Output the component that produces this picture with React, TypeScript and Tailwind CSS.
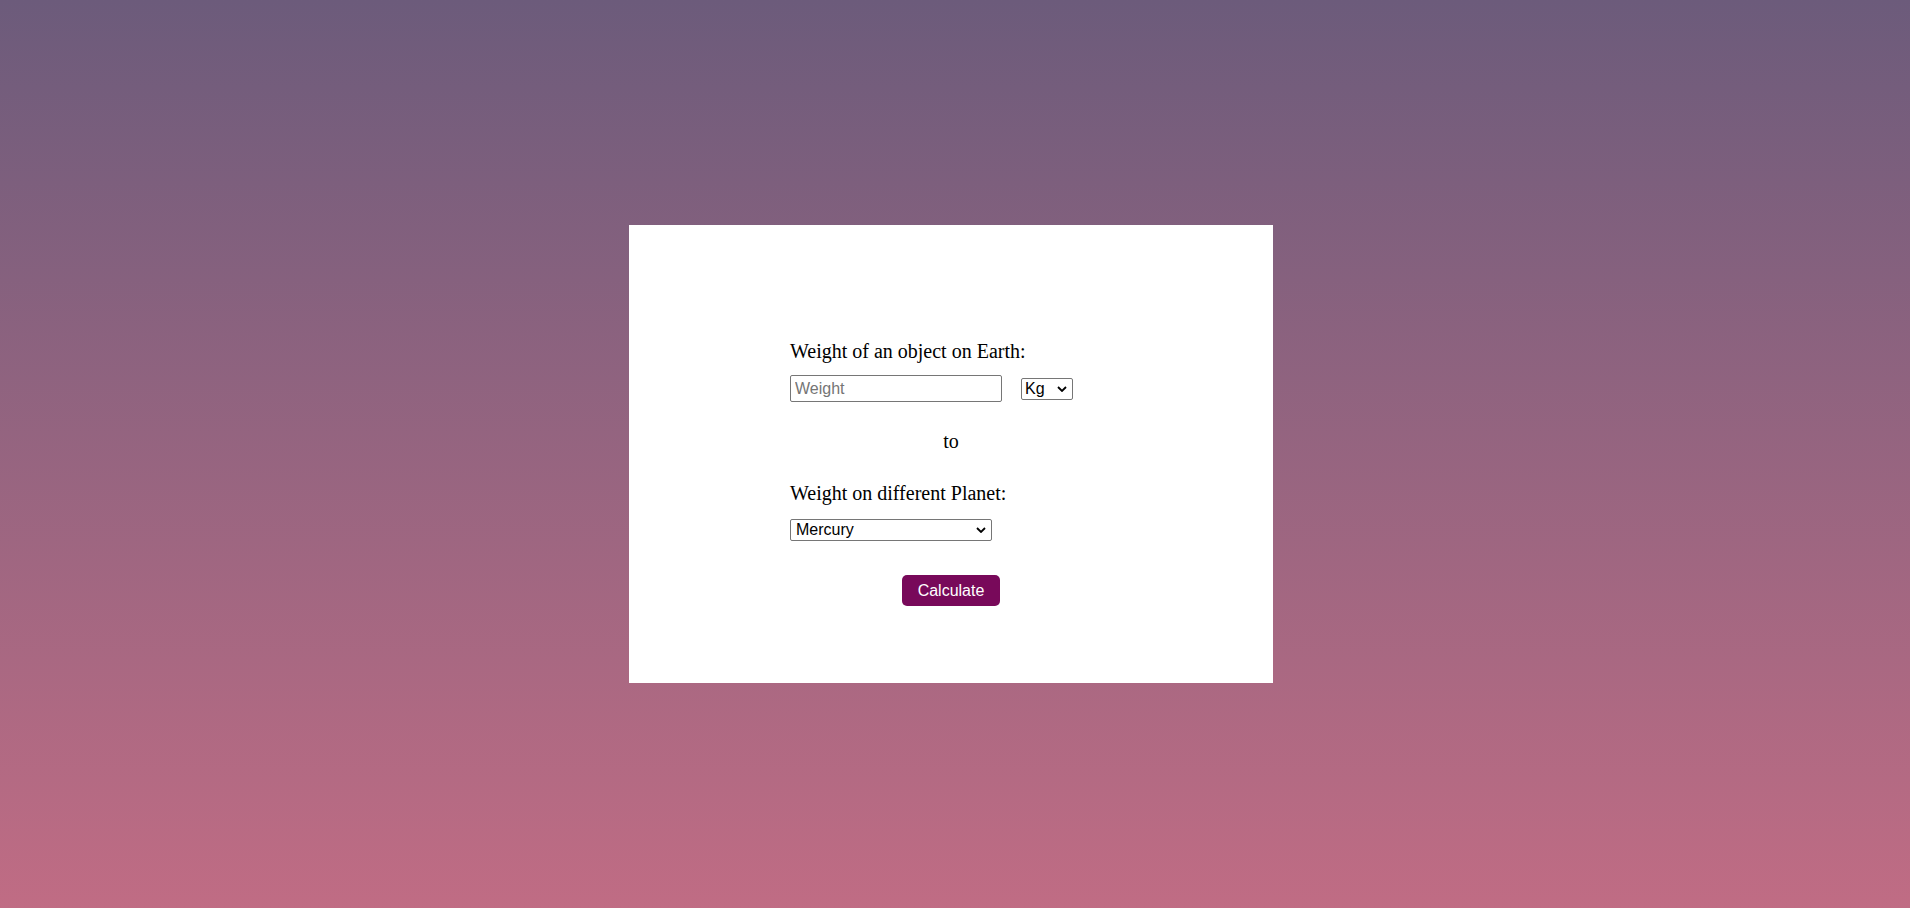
import { useState } from 'react';

/**
 * Planet weight converter – single centered card on a gradient
 */
function Chevron() {
  return (
    <svg
      viewBox="0 0 10 6"
      className="pointer-events-none absolute right-[6px] top-1/2 -translate-y-1/2 w-[10px] h-[6px]"
      fill="none"
      stroke="#000"
      strokeWidth="1.8"
    >
      <path d="M1 1 L5 5 L9 1" />
    </svg>
  );
}

export default function App() {
  const [weight, setWeight] = useState('');
  const [unit, setUnit] = useState('Kg');
  const [planet, setPlanet] = useState('Mercury');

  const planets = ['Mercury', 'Venus', 'Mars', 'Jupiter', 'Saturn', 'Uranus', 'Neptune', 'Pluto'];

  return (
    <div className="min-h-screen w-full bg-gradient-to-b from-[#6c5b7b] to-[#c06c84] flex items-center justify-center pr-2">
      {/* Card */}
      <div className="w-[644px] h-[458px] bg-white pt-[115px]">
        <div className="w-[322px] mx-auto font-['Liberation_Serif',_'Times_New_Roman',serif] text-black">
          <p className="text-[20px] leading-[23px]">Weight of an object on Earth:</p>

          <div className="mt-3 flex items-center gap-[19px] font-['Liberation_Sans',Arial,sans-serif]">
            <input
              type="text"
              value={weight}
              onChange={(e) => setWeight(e.target.value)}
              placeholder="Weight"
              className="w-[212px] h-[27px] border border-[#767676] rounded-[2px] px-[4px] text-[16px] placeholder:text-[#757575] outline-none"
            />
            <div className="relative">
              <select
                value={unit}
                onChange={(e) => setUnit(e.target.value)}
                className="appearance-none block h-[22px] w-[52px] border border-[#767676] rounded-[2px] pl-[3px] text-[16px] leading-[20px] bg-white"
              >
                <option>Kg</option>
                <option>Lb</option>
              </select>
              <Chevron />
            </div>
          </div>

          <p className="mt-[28px] text-center text-[20px] leading-[23px]">to</p>

          <p className="mt-[29px] text-[20px] leading-[23px]">Weight on different Planet:</p>

          <div className="relative mt-[14px] w-[202px] font-['Liberation_Sans',Arial,sans-serif]">
            <select
              value={planet}
              onChange={(e) => setPlanet(e.target.value)}
              className="appearance-none block h-[22px] w-[202px] border border-[#767676] rounded-[2px] pl-[5px] text-[16px] leading-[20px] bg-white"
            >
              {planets.map((p) => (
                <option key={p}>{p}</option>
              ))}
            </select>
            <Chevron />
          </div>

          <div className="mt-[34px] flex justify-center">
            <button className="w-[98px] h-[31px] rounded-[5px] bg-[#78095a] text-white text-[16px] font-['Liberation_Sans',Arial,sans-serif]">
              Calculate
            </button>
          </div>
        </div>
      </div>
    </div>
  );
}
